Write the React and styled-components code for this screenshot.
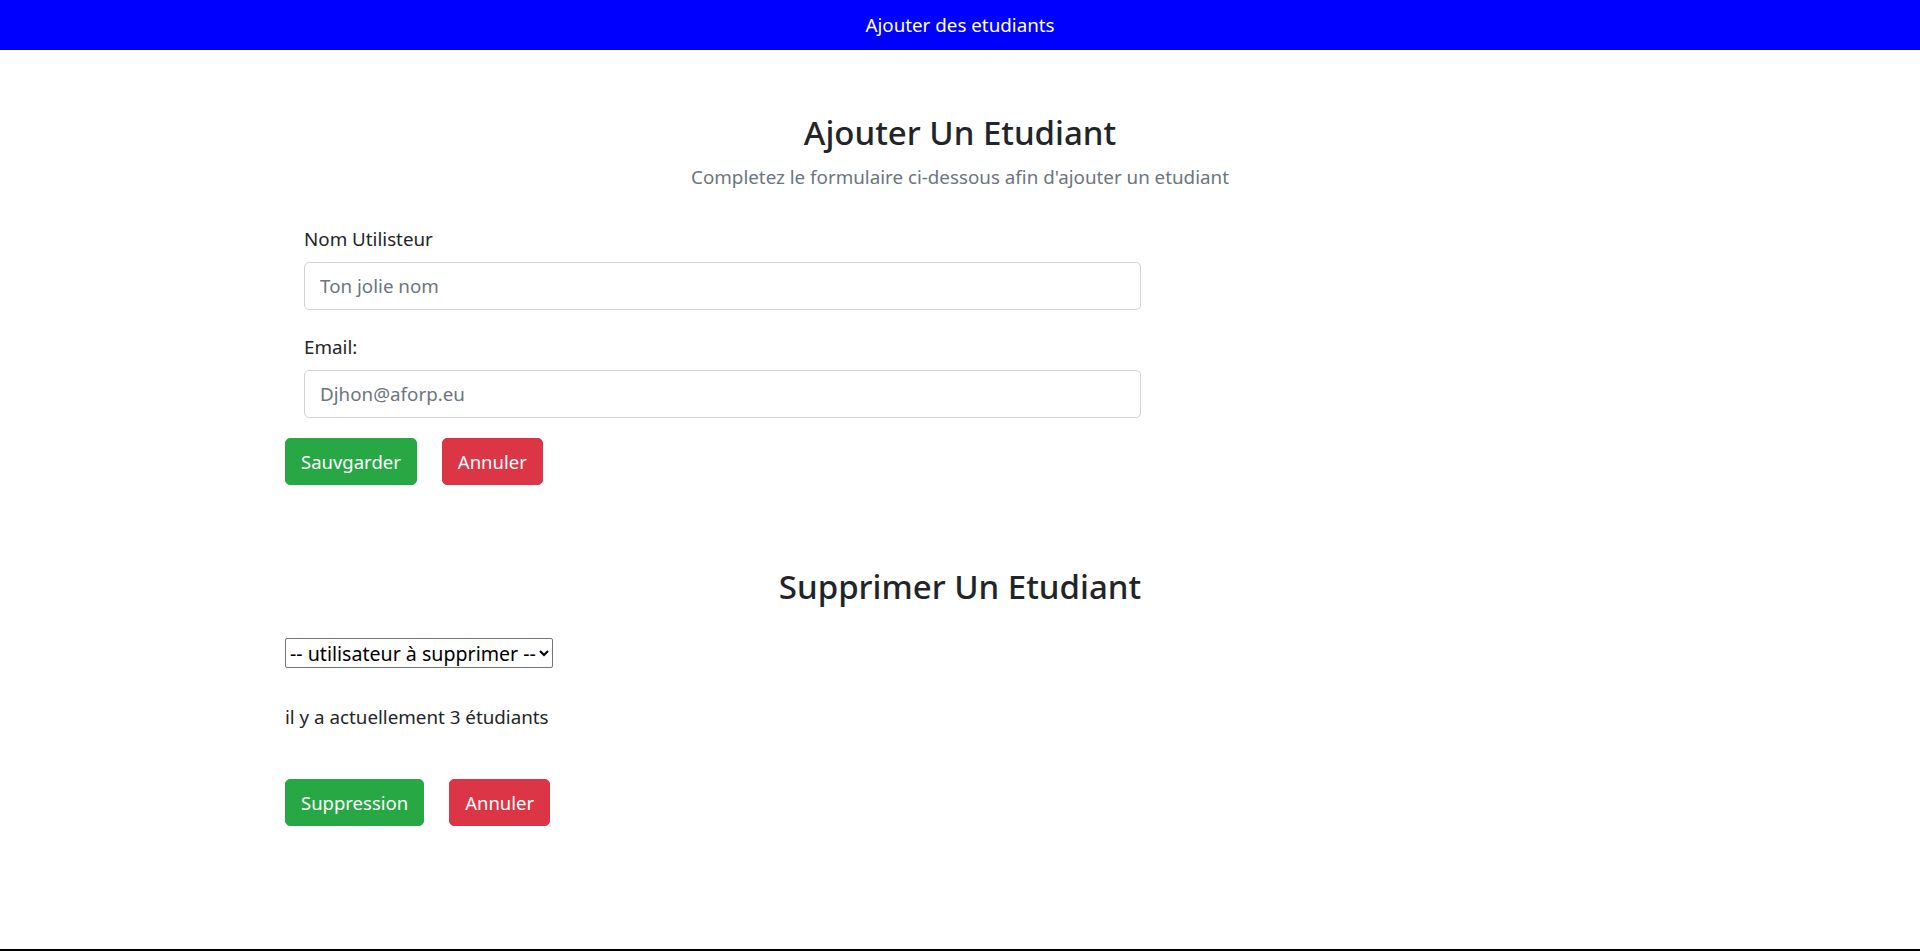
import React from 'react'
import styled, { createGlobalStyle } from 'styled-components'

const GlobalStyle = createGlobalStyle`
  * {
    box-sizing: border-box;
  }
  body {
    margin: 0;
    background-color: #fff;
    color: #212529;
    font-family: "Segoe UI", "Noto Sans", "Open Sans", sans-serif;
    font-size: 18.8px;
    line-height: 1.5;
  }
`

const Page = styled.div`
  display: flex;
  flex-direction: column;
  min-height: 100vh;
`

const TopBar = styled.header`
  background-color: #0000ff;
  color: #fff;
  height: 50px;
  display: flex;
  align-items: center;
  justify-content: center;
  font-size: 18.8px;
`

const Main = styled.main`
  flex: 1;
  width: 1350px;
  margin: 0 auto;
  padding-top: 62px;
`

const Section = styled.section`
  display: flex;
  flex-direction: column;
  margin-bottom: ${(props) => props.gap || '0'};
`

const Title = styled.h3`
  margin: 0;
  font-size: 33px;
  font-weight: 500;
  line-height: 42px;
  text-align: center;
`

const Subtitle = styled.p`
  margin: 8px 0 0;
  color: #6c757d;
  text-align: center;
  line-height: 30px;
`

const Form = styled.form`
  display: flex;
  flex-direction: column;
  margin-top: 32px;
`

const Field = styled.div`
  display: flex;
  flex-direction: column;
  padding-left: 19px;
  margin-bottom: ${(props) => props.gap || '22px'};
`

const Label = styled.label`
  line-height: 30px;
  margin-bottom: 8px;
`

const Input = styled.input`
  width: 837px;
  height: 48px;
  padding: 7px 15px;
  font-family: inherit;
  font-size: 18.8px;
  color: #212529;
  border: 1px solid #ced4da;
  border-radius: 5px;
  outline: none;
  &::placeholder {
    color: #6c757d;
  }
`

const Actions = styled.div`
  display: flex;
  gap: 25px;
  margin-top: ${(props) => props.top || '0'};
`

const Button = styled.button`
  height: 47px;
  padding: 0 15px;
  font-family: inherit;
  font-size: 18.5px;
  line-height: 30px;
  color: #fff;
  border: 1px solid ${(props) => (props.danger ? '#dc3545' : '#28a745')};
  background-color: ${(props) => (props.danger ? '#dc3545' : '#28a745')};
  border-radius: 5px;
  cursor: pointer;
`

const Select = styled.select`
  align-self: flex-start;
  margin-top: 30px;
  height: 30px;
  font-family: inherit;
  font-size: 19.6px;
  color: #000;
  border: 1px solid #767676;
  border-radius: 2px;
  background-color: #fff;
`

const Count = styled.p`
  margin: 34px 0 0;
  line-height: 30px;
`

const Footer = styled.footer`
  border-top: 2px solid #000;
`

const App = () => {
  return (
    <Page>
      <GlobalStyle />
      <TopBar>Ajouter des etudiants</TopBar>
      <Main>
        <Section gap="81px">
          <Title>Ajouter Un Etudiant</Title>
          <Subtitle>Completez le formulaire ci-dessous afin d'ajouter un etudiant</Subtitle>
          <Form onSubmit={(e) => e.preventDefault()}>
            <Field>
              <Label htmlFor="nom">Nom Utilisteur</Label>
              <Input id="nom" type="text" placeholder="Ton jolie nom" />
            </Field>
            <Field gap="20px">
              <Label htmlFor="email">Email:</Label>
              <Input id="email" type="email" placeholder="Djhon@aforp.eu" />
            </Field>
            <Actions>
              <Button type="submit">Sauvgarder</Button>
              <Button type="button" danger>Annuler</Button>
            </Actions>
          </Form>
        </Section>

        <Section>
          <Title>Supprimer Un Etudiant</Title>
          <Select defaultValue="">
            <option value="">-- utilisateur à supprimer --</option>
            <option value="1">Djhon</option>
            <option value="2">Marie</option>
            <option value="3">Paul</option>
          </Select>
          <Count>il y a actuellement 3 étudiants</Count>
          <Actions top="47px">
            <Button type="button">Suppression</Button>
            <Button type="button" danger>Annuler</Button>
          </Actions>
        </Section>
      </Main>
      <Footer />
    </Page>
  )
}

export default App
